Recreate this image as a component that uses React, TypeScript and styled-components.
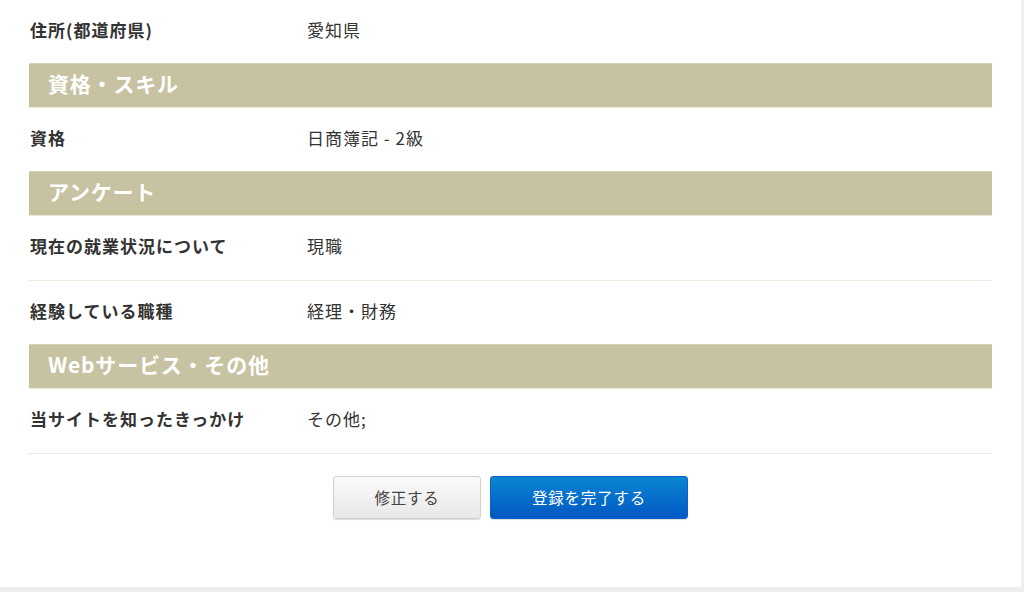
import React from 'react'
import styled, { createGlobalStyle } from 'styled-components'

const GlobalStyle = createGlobalStyle`
  html, body {
    margin: 0;
    padding: 0;
    background: #efefef;
  }
  body {
    font-family: 'Noto Sans CJK JP', 'Noto Sans', sans-serif;
    color: #333;
  }
`

type Row = { label: string; value: string; line?: boolean }
type Section = { title?: string; rows: Row[] }

const sections: Section[] = [
  { rows: [{ label: '住所(都道府県)', value: '愛知県' }] },
  { title: '資格・スキル', rows: [{ label: '資格', value: '日商簿記 - 2級' }] },
  {
    title: 'アンケート',
    rows: [
      { label: '現在の就業状況について', value: '現職', line: true },
      { label: '経験している職種', value: '経理・財務' },
    ],
  },
  {
    title: 'Webサービス・その他',
    rows: [{ label: '当サイトを知ったきっかけ', value: 'その他;', line: true }],
  },
]

const Panel = styled.div`
  width: 1021px;
  height: 587px;
  background: #fff;
  box-sizing: border-box;
  padding: 0 29px;
  overflow: hidden;
`

const Header = styled.h3`
  margin: 0;
  height: 43px;
  box-sizing: content-box;
  padding: 0 0 0 19px;
  display: flex;
  align-items: center;
  background: #c7c2a1;
  border-top: 1px dotted #e4e0cc;
  border-bottom: 1px solid #ebe8d8;
  color: #fff;
  font-size: 21px;
  font-weight: 700;
  letter-spacing: 0.8px;

  & > span {
    margin-top: -5px;
  }
`

const FieldRow = styled.div<{ $line?: boolean }>`
  display: grid;
  grid-template-columns: 277px 1fr;
  align-items: center;
  box-sizing: border-box;
  height: ${({ $line }) => ($line ? '65px' : '63px')};
  border-bottom: ${({ $line }) => ($line ? '1px dotted #ddd9c4' : 'none')};
  padding: 0 0 5px 1px;
`

const Label = styled.span`
  font-size: 17px;
  font-weight: 700;
  letter-spacing: 1px;
  color: #333;
`

const Value = styled.span`
  font-size: 17px;
  letter-spacing: 1px;
  color: #333;
`

const Actions = styled.div`
  display: flex;
  justify-content: center;
  gap: 9px;
  margin-top: 22px;
`

const Button = styled.button<{ $primary?: boolean }>`
  height: 43px;
  width: ${({ $primary }) => ($primary ? '198px' : '148px')};
  border-radius: 3px;
  font-family: inherit;
  font-size: 15.5px;
  letter-spacing: 0.8px;
  padding: 0 0 2px;
  cursor: pointer;
  border: 1px solid ${({ $primary }) => ($primary ? '#0a62c4' : '#d2d2d2')};
  color: ${({ $primary }) => ($primary ? '#fff' : '#444')};
  background: ${({ $primary }) =>
    $primary
      ? 'linear-gradient(to bottom, #0b86d1, #0058c4)'
      : 'linear-gradient(to bottom, #fafafa, #e8e8e8)'};
  box-shadow: 0 1px 1px rgba(0, 0, 0, 0.15);
`

export default function App() {
  return (
    <>
      <GlobalStyle />
      <Panel>
        {sections.map((s, i) => (
          <React.Fragment key={i}>
            {s.title && (
              <Header>
                <span>{s.title}</span>
              </Header>
            )}
            {s.rows.map((r) => (
              <FieldRow key={r.label} $line={r.line}>
                <Label>{r.label}</Label>
                <Value>{r.value}</Value>
              </FieldRow>
            ))}
          </React.Fragment>
        ))}
        <Actions>
          <Button>修正する</Button>
          <Button $primary>登録を完了する</Button>
        </Actions>
      </Panel>
    </>
  )
}
